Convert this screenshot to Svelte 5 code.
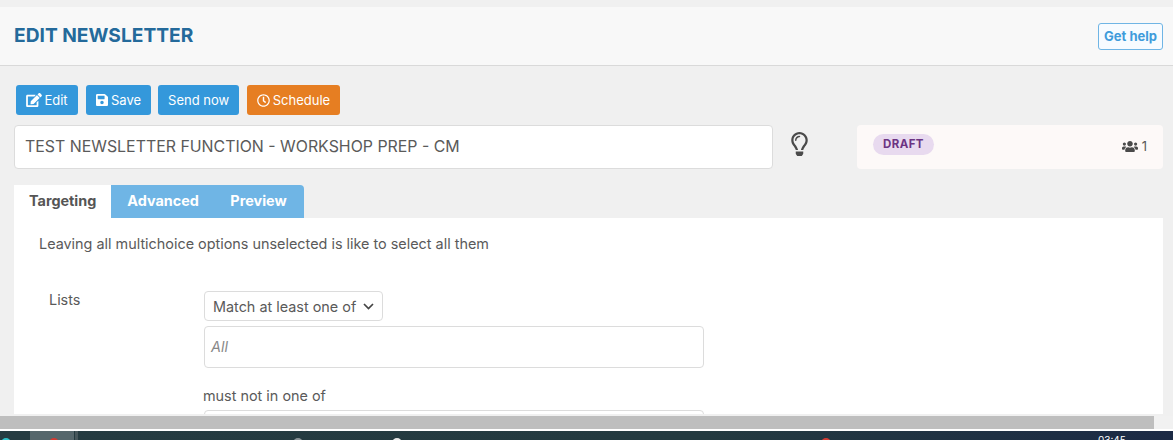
<script>
  const tabs = ['Targeting', 'Advanced', 'Preview'];
</script>

<div class="screen">
  <div class="page">
    <header class="top">
      <h1>EDIT NEWSLETTER</h1>
      <button class="help">Get help</button>
    </header>

    <div class="body">
      <div class="toolbar">
        <button class="btn blue edit">
          <svg class="ico" width="16" height="14" viewBox="0 0 576 512"><path d="M402.6 83.2l90.2 90.2c3.8 3.8 3.8 10 0 13.8L274.4 405.6l-92.8 10.3c-12.4 1.4-22.9-9.1-21.5-21.5l10.3-92.8L388.8 83.2c3.8-3.8 10-3.8 13.8 0zm162-22.9l-48.8-48.8c-15.2-15.2-39.9-15.2-55.2 0l-35.4 35.4c-3.8 3.8-3.8 10 0 13.8l90.2 90.2c3.8 3.8 10 3.8 13.8 0l35.4-35.4c15.2-15.3 15.2-40 0-55.2zM384 346.2V448H64V128h229.8c3.2 0 6.2-1.3 8.5-3.5l40-40c7.6-7.6 2.2-20.5-8.5-20.5H48C21.5 64 0 85.5 0 112v352c0 26.5 21.5 48 48 48h352c26.5 0 48-21.5 48-48V306.2c0-10.7-12.9-16-20.5-8.5l-40 40c-2.2 2.3-3.5 5.3-3.5 8.5z"/></svg>
          Edit
        </button>
        <button class="btn blue save">
          <svg class="ico" width="12" height="14" viewBox="0 0 448 512"><path d="M433.941 129.941l-83.882-83.882A48 48 0 0 0 316.118 32H48C21.49 32 0 53.49 0 80v352c0 26.51 21.49 48 48 48h352c26.51 0 48-21.49 48-48V163.882a48 48 0 0 0-14.059-33.941zM224 416c-35.346 0-64-28.654-64-64 0-35.346 28.654-64 64-64s64 28.654 64 64c0 35.346-28.654 64-64 64zm96-304.52V212c0 6.627-5.373 12-12 12H76c-6.627 0-12-5.373-12-12V108c0-6.627 5.373-12 12-12h228.52c3.183 0 6.235 1.264 8.485 3.515l3.48 3.48A11.996 11.996 0 0 1 320 111.48z"/></svg>
          Save
        </button>
        <button class="btn blue">Send now</button>
        <button class="btn orange">
          <svg class="ico" width="13" height="13" viewBox="0 0 512 512"><path d="M256 8C119 8 8 119 8 256s111 248 248 248 248-111 248-248S393 8 256 8zm0 448c-110.5 0-200-89.5-200-200S145.5 56 256 56s200 89.5 200 200-89.5 200-200 200zm61.8-104.4l-84.9-61.7c-3.1-2.3-4.9-5.9-4.9-9.7V116c0-6.6 5.4-12 12-12h32c6.6 0 12 5.4 12 12v141.7l66.8 48.6c5.4 3.9 6.5 11.4 2.6 16.8L334.6 349c-3.9 5.3-11.4 6.5-16.8 2.6z"/></svg>
          Schedule
        </button>
      </div>

      <div class="title-row">
        <div class="name">TEST NEWSLETTER FUNCTION - WORKSHOP PREP - CM</div>
        <div class="bulb">
          <svg width="17" height="24" viewBox="0 0 352 512"><path d="M176 80c-52.94 0-96 43.06-96 96 0 8.84 7.16 16 16 16s16-7.16 16-16c0-35.3 28.72-64 64-64 8.84 0 16-7.16 16-16s-7.16-16-16-16zM96.06 459.17c0 3.15.93 6.22 2.68 8.84l24.51 36.84c2.97 4.46 7.97 7.14 13.32 7.14h78.85c5.36 0 10.36-2.68 13.32-7.14l24.51-36.84c1.74-2.62 2.67-5.7 2.68-8.84l.05-43.18H96.02l.04 43.18zM176 0C73.72 0 0 82.97 0 176c0 44.37 16.45 84.85 43.56 115.78 16.64 18.99 42.74 58.8 52.42 92.16v.06h48v-.12c-.01-4.77-.72-9.51-2.15-14.07-5.59-17.81-22.82-64.77-62.17-109.67-20.54-23.43-31.52-53.15-31.61-84.14-.2-73.64 59.67-128 127.95-128 70.58 0 128 57.42 128 128 0 30.97-11.24 60.85-31.65 84.14-39.11 44.61-56.42 91.47-62.1 109.46a47.507 47.507 0 0 0-2.22 14.3v.1h48v-.05c9.68-33.37 35.78-73.18 52.42-92.16C335.55 260.85 352 220.37 352 176 352 78.8 273.2 0 176 0z"/></svg>
        </div>
        <div class="status">
          <span class="badge">DRAFT</span>
          <span class="count">
            <svg width="16" height="13" viewBox="0 0 640 512"><path d="M96 224c35.3 0 64-28.7 64-64s-28.7-64-64-64-64 28.7-64 64 28.7 64 64 64zm448 0c35.3 0 64-28.7 64-64s-28.7-64-64-64-64 28.7-64 64 28.7 64 64 64zm32 32h-64c-17.6 0-33.5 7.1-45.1 18.6 40.3 22.1 68.9 62 75.1 109.4h66c17.7 0 32-14.3 32-32v-32c0-35.3-28.7-64-64-64zm-256 0c61.9 0 112-50.1 112-112S381.9 32 320 32 208 82.1 208 144s50.1 112 112 112zm76.8 32h-8.3c-20.8 10-43.9 16-68.5 16s-47.6-6-68.5-16h-8.3C179.6 288 128 339.6 128 403.2V432c0 26.5 21.5 48 48 48h288c26.5 0 48-21.5 48-48v-28.8c0-63.6-51.6-115.2-115.2-115.2zm-223.7-13.4C161.5 263.1 145.6 256 128 256H64c-35.3 0-64 28.7-64 64v32c0 17.7 14.3 32 32 32h65.9c6.3-47.4 34.9-87.3 75.2-109.4z"/></svg>
            1
          </span>
        </div>
      </div>

      <div class="tabs">
        {#each tabs as tab, i}
          <div class="tab" class:active={i === 0}>{tab}</div>
        {/each}
      </div>

      <section class="panel">
        <p class="note">Leaving all multichoice options unselected is like to select all them</p>
        <div class="field">
          <div class="label">Lists</div>
          <div class="controls">
            <div class="select">
              Match at least one of
              <svg width="11" height="7" viewBox="0 0 11 7"><path d="M1 1l4.5 4.5L10 1" fill="none" stroke="#444" stroke-width="1.7"/></svg>
            </div>
            <div class="multi">All</div>
            <div class="sub">must not in one of</div>
            <div class="multi"></div>
          </div>
        </div>
      </section>
    </div>
  </div>

  <div class="scroll"><div class="thumb"></div></div>

  <footer class="taskbar">
    <span class="app"></span>
    <span class="sep"></span>
    <span class="mark cyan"></span>
    <span class="mark red one"></span>
    <span class="mark grey"></span>
    <span class="mark white"></span>
    <span class="mark red two"></span>
    <span class="time">03:45</span>
  </footer>
</div>

<style>
  :global(body) {
    margin: 0;
    background: #f0f0f0;
    overflow: hidden;
  }
  .screen {
    height: 440px;
    overflow: hidden;
    font-family: Inter, "Liberation Sans", sans-serif;
    color: #5a5a5a;
  }
  .page {
    height: 414px;
    padding-top: 7px;
    box-sizing: border-box;
    overflow: hidden;
  }
  .top {
    display: flex;
    align-items: center;
    justify-content: space-between;
    height: 59px;
    box-sizing: border-box;
    padding: 0 10px 0 14px;
    background: #f8f8f8;
    border-bottom: 1px solid #d9d9d9;
  }
  h1 {
    margin: 0 0 2px;
    font-size: 19.2px;
    line-height: 23px;
    font-weight: 700;
    color: #246a9b;
  }
  button {
    font-family: inherit;
    cursor: pointer;
  }
  .help {
    width: 65px;
    height: 27px;
    padding: 0;
    font-size: 13px;
    font-weight: 700;
    color: #3f9bdb;
    background: #f7fbff;
    border: 1px solid #6fb5e5;
    border-radius: 3px;
  }
  .body {
    padding: 19px 10px 0 14px;
  }
  .toolbar {
    display: flex;
    gap: 8px;
    margin-left: 2px;
  }
  .btn {
    display: flex;
    align-items: center;
    justify-content: center;
    gap: 3px;
    height: 30px;
    padding: 0 10px;
    border: 0;
    border-radius: 3px;
    font-size: 13px;
    color: #fff;
  }
  .edit {
    gap: 2px;
    width: 62px;
    padding: 0;
  }
  .save {
    margin-right: -1px;
  }
  .ico {
    fill: #fff;
  }
  .blue {
    background: #3498db;
  }
  .orange {
    padding: 0 9.5px;
    background: #e67e22;
  }
  .title-row {
    display: flex;
    align-items: stretch;
    margin-top: 10px;
    height: 44px;
  }
  .name {
    flex: 0 0 759px;
    box-sizing: border-box;
    display: flex;
    align-items: center;
    padding: 0 0 2px 10px;
    font-size: 15.9px;
    background: #fff;
    border: 1px solid #dcdcdc;
    border-radius: 4px;
  }
  .bulb {
    flex: 0 0 84px;
    padding: 7px 0 0 18px;
    box-sizing: border-box;
  }
  .bulb svg,
  .count svg {
    display: block;
    fill: #4a4a4a;
  }
  .status {
    flex: 1;
    display: flex;
    align-items: center;
    justify-content: space-between;
    padding: 0 16px;
    background: #fdf9f8;
    border-radius: 4px;
  }
  .badge {
    height: 21px;
    margin-top: -6px;
    padding: 0 10px;
    line-height: 21px;
    font-size: 11.5px;
    font-weight: 700;
    letter-spacing: 0.4px;
    color: #6c3483;
    background: #e8daef;
    border-radius: 11px;
  }
  .count {
    display: flex;
    align-items: center;
    gap: 4px;
    margin-top: -2px;
    font-size: 13px;
    line-height: 16px;
  }
  .tabs {
    display: flex;
    width: max-content;
    margin-top: 16px;
    background: #6fb5e5;
    border-radius: 0 4px 0 0;
  }
  .tab {
    height: 33px;
    padding: 0 15.5px 0 16px;
    line-height: 32px;
    font-size: 14.4px;
    font-weight: 700;
    color: #fff;
  }
  .tab:last-child {
    padding-right: 17.5px;
  }
  .tab.active {
    padding: 0 15px;
    color: #555;
    background: #fff;
  }
  .panel {
    height: 300px;
    padding: 17px 0 0 25px;
    background: #fff;
  }
  .note {
    margin: 0;
    font-size: 14.4px;
    line-height: 17px;
  }
  .field {
    display: flex;
    margin-top: 39px;
    font-size: 14.4px;
  }
  .label {
    width: 165px;
    padding: 0 0 0 10px;
    box-sizing: border-box;
    line-height: 18px;
  }
  .controls {
    width: 500px;
  }
  .select {
    display: flex;
    align-items: center;
    justify-content: space-between;
    width: 179px;
    height: 30px;
    box-sizing: border-box;
    padding: 0 8px;
    white-space: nowrap;
    background: #fff;
    border: 1px solid #dcdcdc;
    border-radius: 4px;
  }
  .multi {
    box-sizing: border-box;
    height: 42px;
    margin-top: 5px;
    padding-left: 6px;
    line-height: 40px;
    font-style: italic;
    color: #888;
    background: #fff;
    border: 1px solid #dcdcdc;
    border-radius: 4px;
  }
  .sub {
    margin: 20px 0 0 -1px;
    line-height: 16px;
  }
  .sub + .multi {
    margin-top: 6px;
  }
  .scroll {
    height: 13px;
    margin-top: 2px;
    background: #f1f1f1;
  }
  .thumb {
    width: 1154px;
    height: 13px;
    background: #bebebe;
  }
  .taskbar {
    position: relative;
    height: 9px;
    margin-top: 2px;
    overflow: hidden;
    background: linear-gradient(90deg, #253b41, #243a40 60%, #1c2a45);
    box-shadow: 0 -2px 0 #fff;
  }
  .app {
    position: absolute;
    left: 30px;
    top: 0;
    width: 44px;
    height: 9px;
    background: #56676c;
  }
  .sep {
    position: absolute;
    left: 75px;
    top: 0;
    width: 3px;
    height: 9px;
    background: #46565b;
  }
  .mark {
    position: absolute;
    top: 7px;
    width: 10px;
    height: 10px;
    border-radius: 50%;
  }
  .cyan {
    left: 1px;
    background: #2fc0c8;
  }
  .red {
    background: #d23c34;
  }
  .one {
    left: 49px;
  }
  .two {
    left: 821px;
  }
  .grey {
    left: 293px;
    background: #8a9498;
  }
  .white {
    left: 392px;
    background: #e8e8e8;
  }
  .time {
    position: absolute;
    left: 1098px;
    top: 3px;
    font-size: 10px;
    line-height: 12px;
    color: #fff;
  }
</style>
